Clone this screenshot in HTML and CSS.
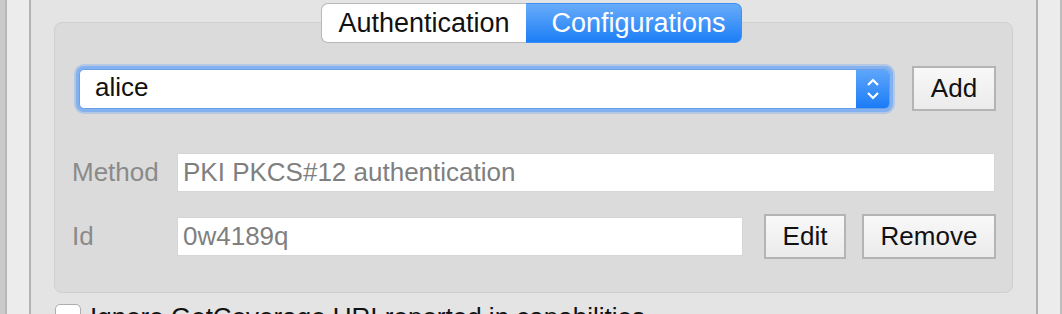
FILE: index.html
```html
<html lang="en">
<head>
    <meta charset="UTF-8">
    <meta name="viewport" content="width=device-width, initial-scale=1.0">
    <title>Authentication Configurations</title>
    <link rel="stylesheet" href="styles.css">
</head>
<body>
    <div class="window">
        <div class="edge"></div>
        <div class="side side-left"></div>
        <div class="content">
            <div class="tabs">
                <div class="tab">Authentication</div>
                <div class="tab active">Configurations</div>
            </div>
            <div class="group">
                <div class="row">
                    <div class="combo">
                        <span class="combo-text">alice</span>
                        <span class="combo-arrow">
                            <svg width="14" height="24" viewBox="0 0 14 24">
                                <polyline points="2,8 7,3 12,8" fill="none" stroke="#fff" stroke-width="2.2"/>
                                <polyline points="2,16 7,21 12,16" fill="none" stroke="#fff" stroke-width="2.2"/>
                            </svg>
                        </span>
                    </div>
                    <button class="btn btn-add">Add</button>
                </div>
                <div class="row row-method">
                    <span class="label">Method</span>
                    <div class="field field-wide">PKI PKCS#12 authentication</div>
                </div>
                <div class="row row-id">
                    <span class="label">Id</span>
                    <div class="field field-id">0w4189q</div>
                    <button class="btn btn-edit">Edit</button>
                    <button class="btn btn-remove">Remove</button>
                </div>
            </div>
            <label class="check-row">
                <span class="checkbox"></span>
                <span>Ignore GetCoverage URI reported in capabilities</span>
            </label>
        </div>
        <div class="side side-right"></div>
        <div class="edge edge-right"></div>
    </div>
</body>
</html>
```

FILE: styles.css
```css
body {
    margin: 0;
    font-family: "Liberation Sans", Arial, sans-serif;
    font-size: 26px;
    color: #111;
    overflow: hidden;
}
.window {
    display: flex;
    width: 1062px;
    height: 314px;
    background-color: #e4e4e4;
}
.edge {
    width: 5px;
    background-color: #cacaca;
    border-right: 2px solid #b8b8b8;
}
.edge-right {
    width: 0;
    border-right: 2px solid #bdbdbd;
    background: none;
}
.side {
    width: 22px;
    background-color: #ececec;
}
.side-left {
    border-right: 2px solid #b2b2b2;
}
.side-right {
    border-left: 2px solid #b2b2b2;
}
.content {
    flex: 1;
    padding: 3px 23px 0 23px;
    overflow: hidden;
}
.tabs {
    display: flex;
    justify-content: center;
    position: relative;
    z-index: 1;
    padding-right: 4px;
}
.tab {
    height: 40px;
    line-height: 38px;
    font-size: 27px;
    box-sizing: border-box;
    width: 205px;
    text-align: center;
    background-color: #fff;
    border: 1px solid #b8b8b8;
    border-right: none;
    border-radius: 7px 0 0 7px;
    color: #111;
}
.tab.active {
    width: 216px;
    padding-left: 10px;
    color: #fff;
    border: 1px solid #3d8ff5;
    border-left: none;
    border-radius: 0 7px 7px 0;
    background: linear-gradient(#68acfa, #1c7ef6);
}
.group {
    margin-top: -21px;
    background-color: #dbdbdb;
    border: 1px solid #cfcfcf;
    border-radius: 8px;
    padding: 43px 16px 33px 17px;
}
.row {
    display: flex;
    align-items: center;
    height: 45px;
}
.row-method {
    margin-top: 39px;
}
.row-id {
    margin-top: 19px;
}
.combo {
    display: flex;
    margin-left: 7px;
    width: 811px;
    height: 40px;
    box-sizing: border-box;
    background-color: #fff;
    border: 1px solid #6a9fe8;
    border-radius: 5px;
    box-shadow: 0 0 0 3px #84b1ef, 0 0 0 5px rgba(132, 177, 239, 0.45);
    overflow: hidden;
}
.combo-text {
    flex: 1;
    padding-left: 15px;
    line-height: 34px;
}
.combo-arrow {
    width: 33px;
    display: flex;
    align-items: center;
    justify-content: center;
    background: linear-gradient(#5ea6fb, #1b7cf6);
}
.btn {
    height: 45px;
    box-sizing: border-box;
    font-family: "Liberation Sans", Arial, sans-serif;
    font-size: 26px;
    color: #111;
    background: linear-gradient(#f8f8f8, #ebebeb);
    border: 2px solid #b4b4b4;
    border-radius: 0;
    padding: 0;
}
.btn-add {
    width: 84px;
    margin-left: 22px;
}
.btn-edit {
    width: 82px;
    margin-left: 21px;
}
.btn-remove {
    width: 134px;
    margin-left: 16px;
}
.label {
    width: 105px;
    color: #8a8a8a;
}
.field {
    height: 39px;
    box-sizing: border-box;
    line-height: 37px;
    padding-left: 5px;
    background-color: #fff;
    border: 1px solid #d6d6d6;
    color: #7f7f7f;
}
.field-wide {
    width: 818px;
}
.field-id {
    width: 566px;
}
.check-row {
    display: flex;
    align-items: flex-start;
    gap: 9px;
    margin-top: 11px;
    margin-left: 1px;
    line-height: 26px;
}
.checkbox {
    width: 26px;
    height: 26px;
    box-sizing: border-box;
    background-color: #fff;
    border: 1px solid #adadad;
    border-radius: 5px;
    flex-shrink: 0;
}
```
